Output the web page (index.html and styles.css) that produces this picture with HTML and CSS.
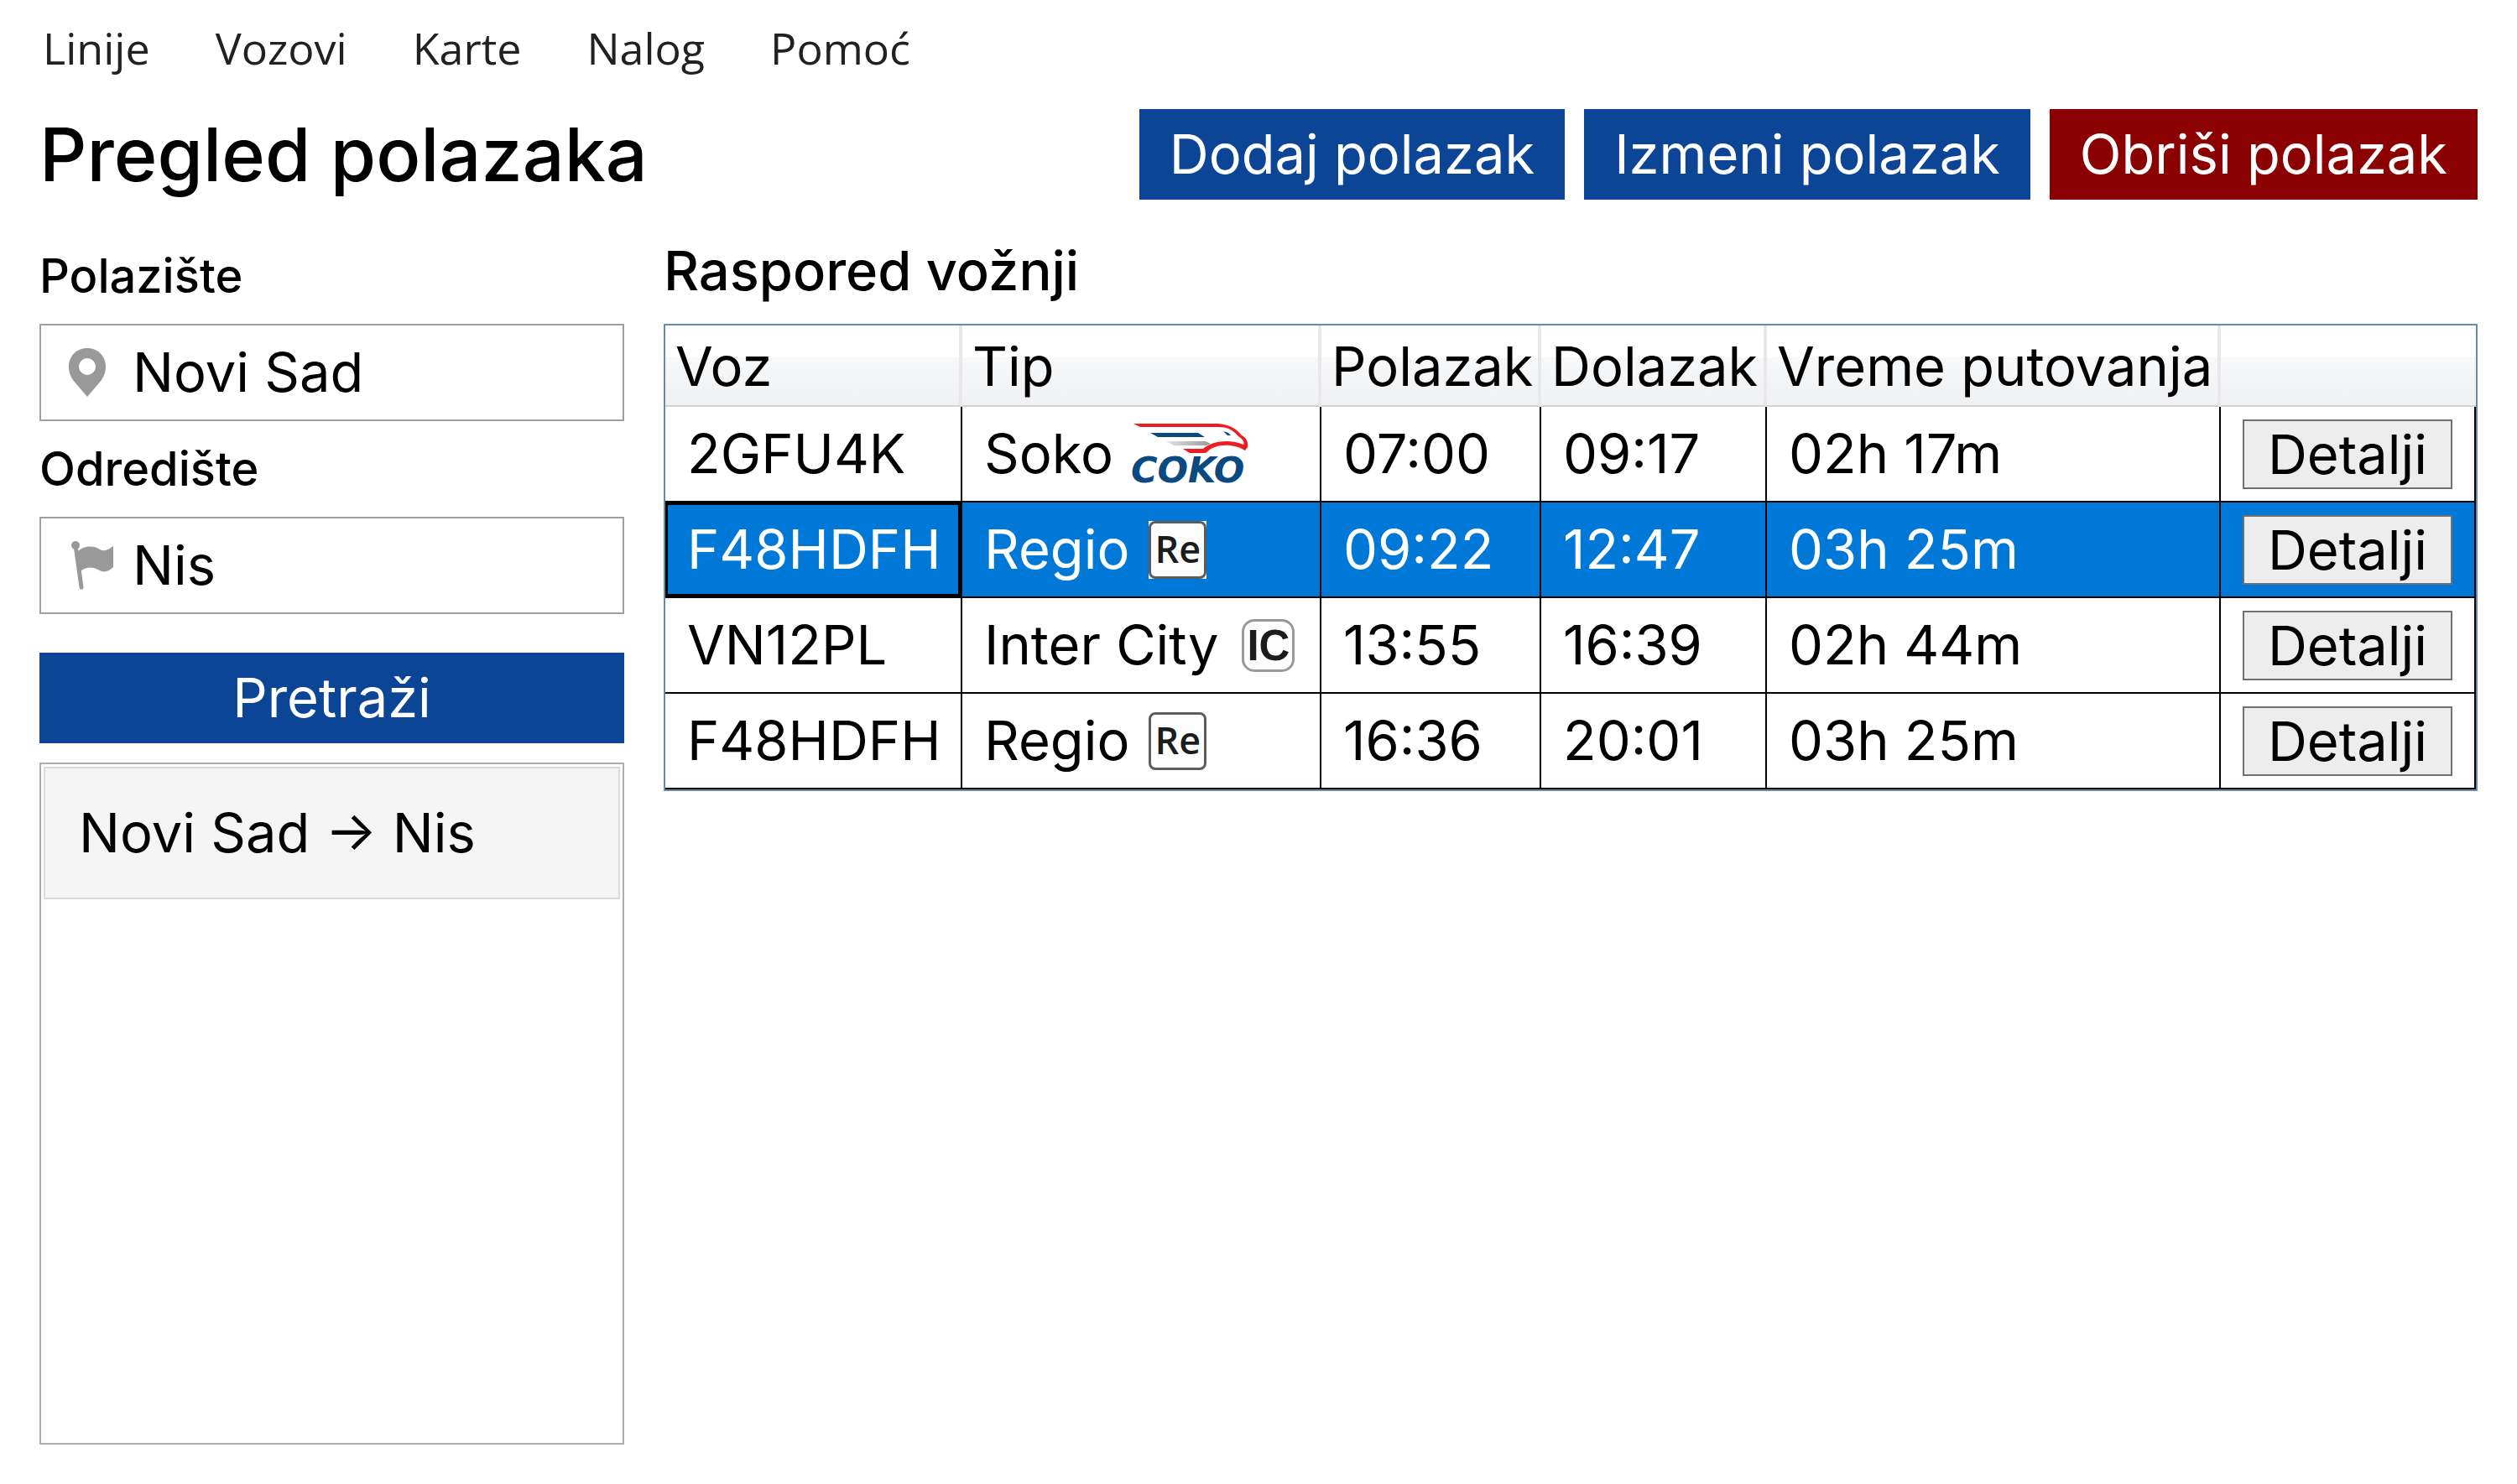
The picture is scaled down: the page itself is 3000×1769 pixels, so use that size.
FILE: index.html
```html
<!DOCTYPE html>
<html lang="sr-Latn">
<head>
<meta charset="utf-8">
<meta name="viewport" content="width=device-width, initial-scale=1">
<title>Pregled polazaka</title>
<link rel="stylesheet" href="styles.css">
</head>
<body>
<div class="page">
  <nav class="menu">
    <a href="#linije">Linije</a>
    <a href="#vozovi">Vozovi</a>
    <a href="#karte">Karte</a>
    <a href="#nalog">Nalog</a>
    <a href="#pomoc">Pomoć</a>
  </nav>

  <header class="header">
    <h1 class="title">Pregled polazaka</h1>
    <div class="actions">
      <button class="btn" type="button">Dodaj polazak</button>
      <button class="btn" type="button">Izmeni polazak</button>
      <button class="btn btn-danger" type="button">Obriši polazak</button>
    </div>
  </header>

  <div class="content">
    <form class="search">
      <label class="label" for="from">Polazište</label>
      <div class="field">
        <svg class="icon" viewBox="0 0 54 58" aria-hidden="true">
          <path fill="#999" fill-rule="evenodd" d="M23 0C10 0 1 10 1 22C1 29 3 33 6 38L23 58L40 38C43 33 45 29 45 22C45 10 36 0 23 0ZM23 12A10 10 0 1 1 23 32A10 10 0 1 1 23 12Z"/>
        </svg>
        <input class="input" id="from" type="text" value="Novi Sad">
      </div>
      <label class="label" for="to">Odredište</label>
      <div class="field">
        <svg class="icon" viewBox="0 0 54 58" aria-hidden="true">
          <circle cx="9" cy="5" r="5" fill="#999"/>
          <path d="M9 5L16 55" stroke="#999" stroke-width="5" stroke-linecap="round"/>
          <path fill="#999" d="M12 12C18 6 30 4 38 10C44 13 48 10 54 6V31C48 37 42 38 36 34C28 30 21 31 15 36Z"/>
        </svg>
        <input class="input" id="to" type="text" value="Nis">
      </div>
      <button class="btn btn-search" type="button">Pretraži</button>
      <ul class="routes">
        <li class="route">Novi Sad → Nis</li>
      </ul>
    </form>

    <main class="schedule">
      <h2 class="subtitle">Raspored vožnji</h2>
      <table class="table">
        <colgroup>
          <col class="col-train"><col class="col-type"><col class="col-dep"><col class="col-arr"><col class="col-time"><col>
        </colgroup>
        <thead>
          <tr><th>Voz</th><th>Tip</th><th>Polazak</th><th>Dolazak</th><th>Vreme putovanja</th><th></th></tr>
        </thead>
        <tbody>
          <tr>
            <td>2GFU4K</td>
            <td><div class="type">Soko
              <svg class="soko" viewBox="0 0 140 74" role="img" aria-label="Soko">
                <defs>
                  <linearGradient id="wing"><stop offset="0" stop-color="#e4e4e4"/><stop offset="1" stop-color="#999"/></linearGradient>
                </defs>
                <path fill="#ed1c24" d="M1 1H102C117 2 124 8 130 15C136 18 138 24 137 29L134 33C124 26 105 24 93 31L87 36H68L60 31H84C96 20 118 20 132 26C134 22 130 19 126 16C119 8 113 5 101 5H9Z"/>
                <path fill="#0b4a80" d="M21 12H78L86 17H30ZM108 10L114 12L117 15H113Z"/>
                <path fill="url(#wing)" d="M40 22H87L93 25L88 27H49Z"/>
                <text class="soko-text" x="-2" y="71">COKO</text>
              </svg></div></td>
            <td>07:00</td><td>09:17</td><td>02h 17m</td>
            <td><button class="details" type="button">Detalji</button></td>
          </tr>
          <tr class="selected">
            <td class="focused">F48HDFH</td>
            <td><div class="type">Regio <span class="badge-box"><span class="badge">Re</span></span></div></td>
            <td>09:22</td><td>12:47</td><td>03h 25m</td>
            <td><button class="details" type="button">Detalji</button></td>
          </tr>
          <tr>
            <td>VN12PL</td>
            <td><div class="type type-ic">Inter City <span class="badge badge-ic">IC</span></div></td>
            <td>13:55</td><td>16:39</td><td>02h 44m</td>
            <td><button class="details" type="button">Detalji</button></td>
          </tr>
          <tr>
            <td>F48HDFH</td>
            <td><div class="type">Regio <span class="badge-box"><span class="badge">Re</span></span></div></td>
            <td>16:36</td><td>20:01</td><td>03h 25m</td>
            <td><button class="details" type="button">Detalji</button></td>
          </tr>
        </tbody>
      </table>
    </main>
  </div>
</div>
</body>
</html>
```
FILE: styles.css
```css
* {
  box-sizing: border-box;
}

body {
  margin: 0;
  background: #fff;
  color: #000;
  font-family: Inter, sans-serif;
  font-size: 65px;
  line-height: 80px;
  font-optical-sizing: none;
}

button,
input {
  font: inherit;
  color: inherit;
}

.page {
  display: flex;
  flex-direction: column;
  min-height: 100vh;
  padding: 0 47px 47px;
}

.menu {
  display: flex;
  gap: 78px;
  padding: 21px 4px 37px;
  font-family: "Open Sans", sans-serif;
  font-size: 52px;
  line-height: 72px;
}

.menu a {
  color: #212121;
  text-decoration: none;
}

.header {
  display: flex;
  align-items: center;
  justify-content: space-between;
  margin-bottom: 45px;
}

.title {
  margin: 0;
  font-size: 88px;
  font-weight: 500;
  line-height: 108px;
}

.actions {
  display: flex;
  gap: 23px;
}

.btn {
  height: 108px;
  padding: 0 36px;
  border: 0;
  background: #0c4596;
  color: #fff;
}

.btn-danger {
  background: #8b0000;
}

.content {
  display: grid;
  flex: 1;
  grid-template-columns: 697px 1fr;
  column-gap: 47px;
}

.search {
  display: flex;
  flex-direction: column;
  padding-top: 12px;
}

.label {
  margin-bottom: 23px;
  font-size: 56px;
  font-weight: 500;
  line-height: 68px;
}

.field {
  display: flex;
  align-items: center;
  height: 116px;
  margin-bottom: 23px;
  padding-left: 32px;
  border: 2px solid #a0a0a0;
}

.icon {
  flex: none;
  width: 54px;
  height: 58px;
}

.input {
  flex: 1;
  min-width: 0;
  height: 80px;
  margin-left: 23px;
  padding: 0;
  border: 0;
  outline: 0;
  background: none;
}

.btn-search {
  margin: 23px 0;
}

.routes {
  flex: 1;
  margin: 0;
  padding: 3px;
  border: 2px solid #abadb3;
  list-style: none;
}

.route {
  padding: 37px 40px;
  border: 2px solid #dadada;
  background: #f5f5f5;
}

.subtitle {
  margin: 0 0 23px;
  font-size: 65px;
  font-weight: 500;
}

.table {
  width: 100%;
  border: 2px solid #688caf;
  border-spacing: 0;
  table-layout: fixed;
}

.col-train { width: 354px; }
.col-type { width: 428px; }
.col-dep { width: 262px; }
.col-arr { width: 269px; }
.col-time { width: 541px; }

.table th {
  height: 97px;
  padding: 2px 0 0 12px;
  border-right: 4px solid #e8e8ea;
  border-bottom: 2px solid #d2d3d5;
  background: linear-gradient(#fff 40%, #f7f8fa 40%, #f0f1f3);
  font-weight: 400;
  text-align: left;
  white-space: nowrap;
}

.table th:last-child {
  border-right: 0;
}

.table td {
  height: 114px;
  padding: 0 0 0 26px;
  border-right: 2px solid #000;
  border-bottom: 2px solid #000;
  white-space: nowrap;
}

.selected td {
  background: #0078d7;
  color: #fff;
}

.table .focused {
  box-shadow: inset 0 0 0 3px #000;
}

.type {
  display: flex;
  align-items: center;
  gap: 23px;
}

.type-ic {
  gap: 28px;
}

.soko {
  overflow: visible;
  width: 140px;
  height: 74px;
}

.soko-text {
  fill: #0b4a80;
  font-family: "DejaVu Sans", sans-serif;
  font-size: 43px;
  font-style: italic;
  font-weight: 700;
}

.badge-box {
  background: #fff;
}

.badge {
  display: block;
  width: 69px;
  height: 69px;
  border: 3px solid #5c5c5c;
  border-radius: 8px;
  background: #fcfcfc;
  color: #1c1c1c;
  font-family: "Open Sans", sans-serif;
  font-size: 45px;
  font-weight: 600;
  line-height: 60px;
  text-align: center;
}

.badge-ic {
  width: 63px;
  height: 63px;
  border-color: #999;
  border-radius: 15px;
  font-family: "Liberation Sans", sans-serif;
  font-size: 51px;
  font-weight: 700;
  line-height: 58px;
}

.details {
  display: block;
  width: 250px;
  height: 83px;
  padding: 0;
  border: 2px solid #707070;
  background: #ededed;
  color: #000;
  line-height: 79px;
}
```
